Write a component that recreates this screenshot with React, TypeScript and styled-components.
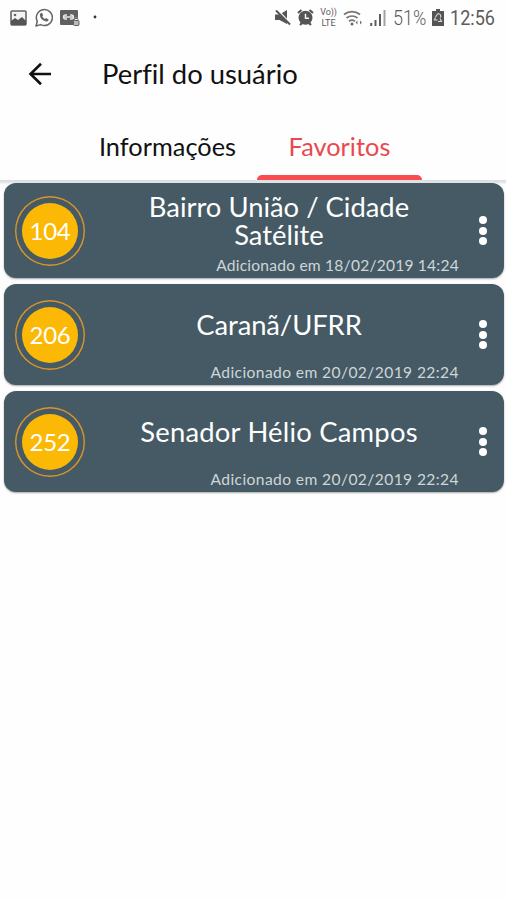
import React from 'react';
import styled, { createGlobalStyle } from 'styled-components';

const GlobalStyle = createGlobalStyle`
  * { box-sizing: border-box; }
  body { margin: 0; background: #fefefe; }
`;

const Screen = styled.main`
  width: 506px;
  height: 900px;
  display: flex;
  flex-direction: column;
  background: #fefefe;
  font-family: Lato, 'Liberation Sans', sans-serif;
  font-variant-ligatures: none;
  color: #111;
  overflow: hidden;
`;

const StatusBar = styled.header`
  height: 35px;
  display: flex;
  justify-content: space-between;
  align-items: center;
  padding: 0 10px;
  color: #5c5c5c;
  font-family: Roboto, sans-serif;
`;

const StatusGroup = styled.div<{ $gap: number }>`
  display: flex;
  align-items: center;
  gap: ${(p) => p.$gap}px;
`;

const StatusSvg = styled.svg`
  display: block;
  flex: none;
`;

const StatusText = styled.span<{ $width: number; $scale: number; $light?: boolean }>`
  width: ${(p) => p.$width}px;
  font-size: 20.3px;
  line-height: 36px;
  font-weight: ${(p) => (p.$light ? 300 : 400)};
  white-space: nowrap;
  transform: scaleX(${(p) => p.$scale});
  transform-origin: left;
`;

const VoLte = styled.span`
  width: 17px;
  display: flex;
  flex-direction: column;
  align-items: center;
  font-size: 9px;
  line-height: 11px;
  letter-spacing: -0.1px;
`;

const AppBar = styled.div`
  height: 77px;
  display: flex;
  align-items: center;
  padding: 0 0 0 28px;
`;

const BackButton = styled.button`
  width: 24px;
  height: 24px;
  margin: 0 50px 0 0;
  padding: 0;
  border: 0;
  background: none;
  color: #111;
`;

const Title = styled.h1`
  margin: 0;
  font-size: 27.4px;
  line-height: 32px;
  font-weight: 400;
`;

const Tabs = styled.nav`
  height: 68px;
  display: grid;
  grid-template-columns: 165px 165px;
  padding-left: 85px;
  column-gap: 7px;
`;

const Tab = styled.button<{ $active?: boolean }>`
  display: flex;
  flex-direction: column;
  justify-content: space-between;
  align-items: center;
  padding: 18px 0 0;
  border: 0;
  background: none;
  font: 400 25.3px/32px Lato, 'Liberation Sans', sans-serif;
  letter-spacing: 0.04px;
  color: ${(p) => (p.$active ? '#e9494e' : '#111')};

  &::after {
    content: '';
    width: 165px;
    height: 5px;
    border-radius: 5px 5px 0 0;
    background: ${(p) => (p.$active ? '#f94b50' : 'transparent')};
  }
`;

const List = styled.ul`
  margin: 0;
  padding: 3px 2.5px 0 3.5px;
  list-style: none;
  display: flex;
  flex-direction: column;
  gap: 6px;
  background: linear-gradient(#d9dcdd, #e8eaea 3px, transparent 4px);
`;

const Card = styled.li<{ $height: number }>`
  height: ${(p) => p.$height}px;
  display: grid;
  grid-template-columns: 70px 1fr 23px;
  padding: 0 9.5px 0 11.5px;
  border-radius: 12px;
  background: #455a64;
  box-shadow: 0 1px 2px rgba(0, 0, 0, 0.35);
  color: #fff;
`;

const Ring = styled.div`
  align-self: center;
  width: 70px;
  height: 70px;
  padding: 6px;
  border-radius: 50%;
  box-shadow: inset 0 0 0 1.4px #d9952a;
  display: flex;
  align-items: center;
  justify-content: center;
`;

const Badge = styled.div`
  width: 56px;
  height: 56px;
  display: flex;
  align-items: center;
  justify-content: center;
  border-radius: 50%;
  background: #fbb906;
  font-size: 24px;
  line-height: 28px;
  letter-spacing: -0.2px;
`;

const Details = styled.div`
  display: flex;
  flex-direction: column;
  justify-content: space-between;
  padding: 0 12px 4.5px 14px;
`;

const RouteName = styled.h2<{ $offset: number; $tracking: number }>`
  margin: ${(p) => p.$offset}px 0 0;
  padding: 0 20px;
  font-size: 27.4px;
  line-height: 28px;
  font-weight: 400;
  letter-spacing: ${(p) => p.$tracking}px;
  text-align: center;
`;

const Added = styled.time<{ $tracking: number }>`
  font-size: 15.6px;
  line-height: 18px;
  letter-spacing: ${(p) => p.$tracking}px;
  text-align: right;
  color: #ced6da;
`;

const MenuButton = styled.button`
  align-self: center;
  display: flex;
  flex-direction: column;
  align-items: center;
  gap: 2.5px;
  padding: 0;
  border: 0;
  background: none;
`;

const Dot = styled.i`
  width: 8px;
  height: 8px;
  border-radius: 50%;
  background: #fff;
`;

const routes = [
  { number: 104, name: 'Bairro União / Cidade Satélite', added: '18/02/2019 14:24', height: 95, offset: 10, tracking: 0, dateTracking: 0.21 },
  { number: 206, name: 'Caranã/UFRR', added: '20/02/2019 22:24', height: 101, offset: 26.5, tracking: -0.1, dateTracking: 0.4 },
  { number: 252, name: 'Senador Hélio Campos', added: '20/02/2019 22:24', height: 101, offset: 26.5, tracking: 0.22, dateTracking: 0.4 },
];

const PictureIcon = () => (
  <StatusSvg width="17" height="16" viewBox="0 0 17 16">
    <rect x="1" y="1" width="15" height="14" rx="1" fill="#f4f4f4" stroke="#666" strokeWidth="1.6" />
    <path d="M1 11l4-3 3 2 4-3 4 4v4H1z" fill="#555" />
    <circle cx="5" cy="5" r="1.3" fill="#666" />
  </StatusSvg>
);

const WhatsAppIcon = () => (
  <StatusSvg width="18" height="19" viewBox="0 0 18 19">
    <path d="M1 18l1.3-4.7A8 8 0 1 1 5.6 16.6z" fill="none" stroke="#666" strokeWidth="1.5" strokeLinejoin="round" />
    <path d="M5.5 5.2l1.5-.4 1.2 2.7-.9 1.1a6 6 0 0 0 2.7 2.5l1.1-1 2.5 1.3c-.2 1.7-1.7 2.3-3.2 1.9C7.7 12.5 5.2 10 4.9 7.4c-.1-.8.1-1.6.6-2.2z" fill="#666" />
  </StatusSvg>
);

const DrmIcon = () => (
  <StatusSvg width="20" height="16" viewBox="0 0 20 16">
    <path d="M1 0h16a1 1 0 0 1 1 1v8h-4v6H1a1 1 0 0 1-1-1V1a1 1 0 0 1 1-1z" fill="#606060" />
    <path d="M7 5H5.5a2 2 0 0 0 0 4H7M10 5h1.5a2 2 0 0 1 0 4H10M4 7h9" fill="none" stroke="#e8e8e8" strokeWidth="1.3" />
    <rect x="13.5" y="10.5" width="5.5" height="5" rx="1" fill="#bbb" stroke="#606060" />
    <path d="M14.5 10V9a1.7 1.7 0 0 1 3.4 0v1" fill="none" stroke="#888" />
  </StatusSvg>
);

const MoreDot = () => (
  <StatusSvg width="9" height="5" viewBox="0 0 9 5"><circle cx="7" cy="2" r="1.4" fill="#333" /></StatusSvg>
);

const MuteIcon = () => (
  <StatusSvg width="16" height="17" viewBox="0 0 16 17">
    <path d="M0 5.5h4.5L12 1v14l-7.5-4H0z" fill="#555" />
    <path d="M2 0l14 15" stroke="#fefefe" strokeWidth="1.5" />
    <path d="M1 1.5l14 14" stroke="#555" strokeWidth="2" />
  </StatusSvg>
);

const AlarmIcon = () => (
  <StatusSvg width="17" height="17" viewBox="0 0 17 17">
    <path d="M1 4l3.500-3M16 4l-3.500-3M3 16l2-2M14 16l-2-2" stroke="#555" strokeWidth="2.2" />
    <circle cx="8.5" cy="8.8" r="7" fill="#555" />
    <path d="M8.5 4.800v4.400h3.500" fill="none" stroke="#f4f4f4" strokeWidth="1.5" />
  </StatusSvg>
);

const WifiIcon = () => (
  <StatusSvg width="21" height="18" viewBox="0 0 21 18">
    <g fill="none" stroke="#777" strokeWidth="1.7">
      <path d="M1 5.5a12.5 12.5 0 0 1 16 0" />
      <path d="M3.5 9a8.5 8.5 0 0 1 11 0" />
      <path d="M6 12.3a5 5 0 0 1 6 0" />
    </g>
    <circle cx="9" cy="15" r="1.5" fill="#666" />
    <path d="M12.500 13.500l2-2v4zM19 13.500l-2-2v4z" fill="#777" />
  </StatusSvg>
);

const SignalIcon = () => (
  <StatusSvg width="17" height="17" viewBox="0 0 17 17">
    <path d="M1.200 17v-3M5.500 17v-6M10 17V5" stroke="#5c5c5c" strokeWidth="2" />
    <path d="M14.500 17V1" stroke="#a2a2a2" strokeWidth="2" />
  </StatusSvg>
);

const BatteryIcon = () => (
  <StatusSvg width="12" height="17" viewBox="0 0 12 17">
    <path d="M4 0h4v2h4v15H0V2h4z" fill="#555" />
    <path d="M6 4.500a2.800 2.800 0 0 1 2.500 4M3.500 8.500l-1 2.500h3M6 4.500L3.500 8M6 12.500h3.500L8 9.500" fill="none" stroke="#ddd" strokeWidth="1.1" />
  </StatusSvg>
);

const BackIcon = () => (
  <StatusSvg width="24" height="24" viewBox="0 0 24 24" fill="none" stroke="currentColor" strokeWidth="2.6">
    <path d="M23 12H2.500M13 1.700L2.500 12 13 22.300" />
  </StatusSvg>
);

export default function App() {
  return (
    <Screen>
      <GlobalStyle />
      <StatusBar>
        <StatusGroup $gap={7.5}>
          <PictureIcon />
          <WhatsAppIcon />
          <DrmIcon />
          <MoreDot />
        </StatusGroup>
        <StatusGroup $gap={6}>
          <MuteIcon />
          <AlarmIcon />
          <VoLte>
            <span>Vo))</span>
            <span>LTE</span>
          </VoLte>
          <WifiIcon />
          <SignalIcon />
          <StatusText $width={33} $scale={0.89} $light>51%</StatusText>
          <BatteryIcon />
          <StatusText $width={46} $scale={0.89}>12:56</StatusText>
        </StatusGroup>
      </StatusBar>
      <AppBar>
        <BackButton aria-label="Voltar"><BackIcon /></BackButton>
        <Title>Perfil do usuário</Title>
      </AppBar>
      <Tabs>
        <Tab>Informações</Tab>
        <Tab $active>Favoritos</Tab>
      </Tabs>
      <List>
        {routes.map((route) => (
          <Card key={route.number} $height={route.height}>
            <Ring><Badge>{route.number}</Badge></Ring>
            <Details>
              <RouteName $offset={route.offset} $tracking={route.tracking}>{route.name}</RouteName>
              <Added $tracking={route.dateTracking}>Adicionado em {route.added}</Added>
            </Details>
            <MenuButton aria-label="Opções"><Dot /><Dot /><Dot /></MenuButton>
          </Card>
        ))}
      </List>
    </Screen>
  );
}
